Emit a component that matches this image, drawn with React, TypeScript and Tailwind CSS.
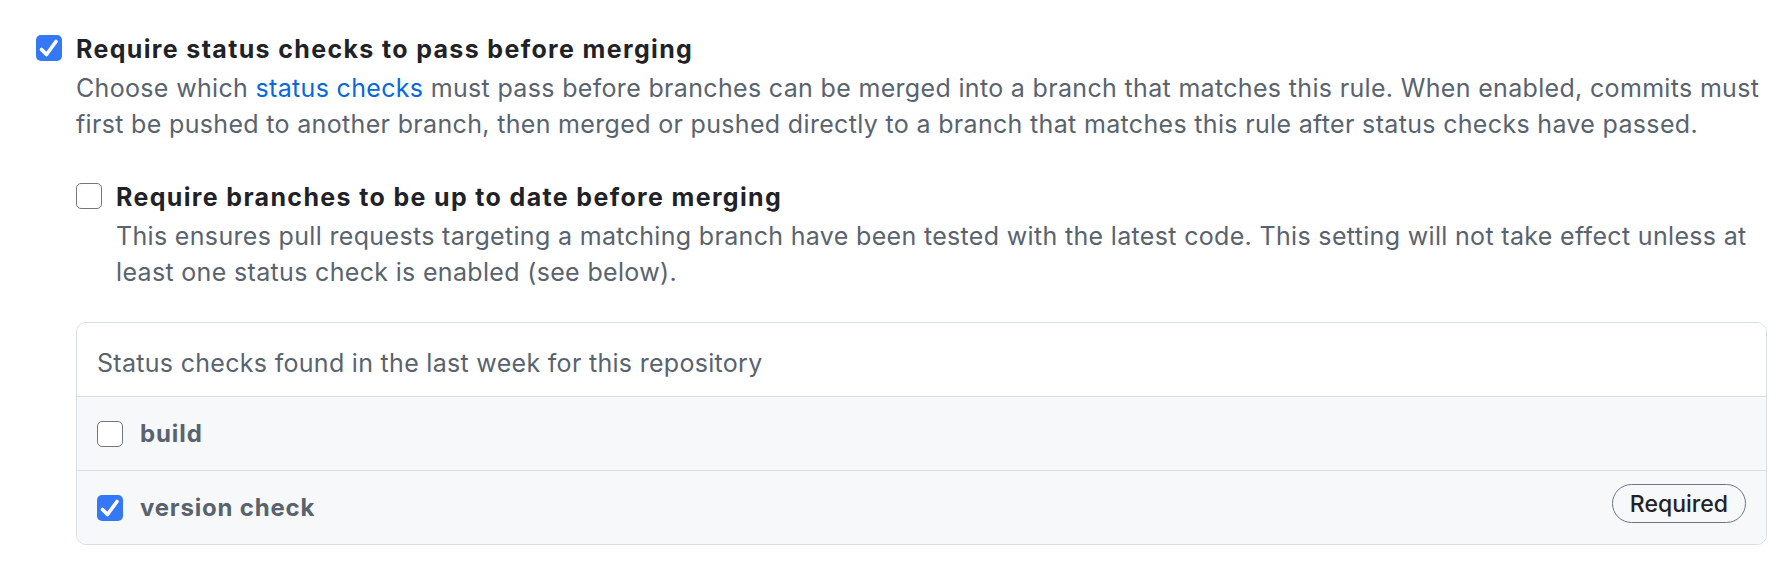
import React from "react";

function Checkbox({ checked }: { checked: boolean }) {
  if (checked) {
    return (
      <div className="w-[26px] h-[26px] shrink-0 rounded-[5px] bg-[#3478f6] flex items-center justify-center">
        <svg width="26" height="26" viewBox="0 0 26 26" fill="none">
          <path d="M5.5 14.5 L10.5 19.5 L20 6.5" stroke="white" strokeWidth="3.6" strokeLinecap="round" strokeLinejoin="round" />
        </svg>
      </div>
    );
  }
  return <div className="w-[26px] h-[26px] shrink-0 rounded-[5px] border-[1.5px] border-[#767676] bg-white" />;
}

export default function App() {
  return (
    <div
      className="bg-white w-[1792px] h-[564px] pl-[36px] pr-[25px] pt-[35px] text-[25px] leading-[36px]"
      style={{ fontFamily: "Inter, 'Noto Sans', sans-serif" }}
    >
      <div className="flex gap-[14px]">
        <div>
          <Checkbox checked />
        </div>
        <div className="flex-1 min-w-0 -mt-[4px]">
          <div className="font-bold text-[#1f2328] mb-[3px] tracking-[1.35px]">
            Require status checks to pass before merging
          </div>
          <div className="text-[#59636e] whitespace-nowrap tracking-[0.33px]">
            Choose which <span className="text-[#0969da]">status checks</span> must pass before branches can be merged into a
            branch that matches this rule. When enabled, commits must
            <br />
            first be pushed to another branch, then merged or pushed directly to a branch that matches this rule after status
            checks have passed.
          </div>

          <div className="flex gap-[14px] mt-[39px]">
            <div className="mt-[2px]">
              <Checkbox checked={false} />
            </div>
            <div className="flex-1 min-w-0 -mt-[2px]">
              <div className="font-bold text-[#1f2328] mb-[3px] tracking-[1.35px]">
                Require branches to be up to date before merging
              </div>
              <div className="text-[#59636e] whitespace-nowrap tracking-[0.33px]">
                This ensures pull requests targeting a matching branch have been tested with the latest code. This setting will
                not take effect unless at
                <br />
                least one status check is enabled (see below).
              </div>
            </div>
          </div>

          <div className="mt-[32px] border-[1.5px] border-[#d8dee4] rounded-[10px] overflow-hidden">
            <div className="h-[74px] flex items-center pt-[6px] px-[20px] text-[#59636e] bg-white border-b-[1.5px] border-[#d8dee4] tracking-[0.3px]">
              Status checks found in the last week for this repository
            </div>
            <div className="h-[74px] flex items-center gap-[17px] px-[20px] bg-[#f6f8fa] border-b-[1.5px] border-[#d8dee4]">
              <Checkbox checked={false} />
              <span className="font-bold text-[24px] tracking-[0.9px] text-[#59636e]">build</span>
            </div>
            <div className="h-[73px] flex items-center gap-[17px] px-[20px] bg-[#f6f8fa]">
              <Checkbox checked />
              <span className="font-bold text-[24px] tracking-[0.8px] text-[#59636e] flex-1">version check</span>
              <span className="mb-[8px] h-[39px] px-[17px] flex items-center rounded-full border-[1.5px] border-[#6e7781] text-[23px] font-medium text-[#1f2328]">
                Required
              </span>
            </div>
          </div>
        </div>
      </div>
    </div>
  );
}
